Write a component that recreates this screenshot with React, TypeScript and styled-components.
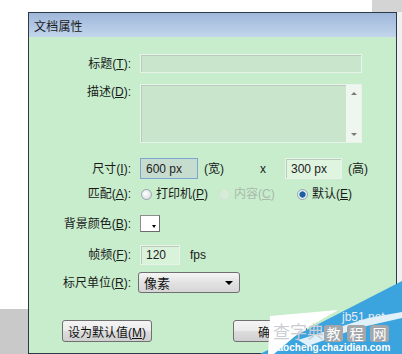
import React from "react";
import styled, { createGlobalStyle } from "styled-components";

const Global = createGlobalStyle`
  html, body { margin: 0; padding: 0; background: #fff; }
  body { font-family: "Liberation Sans", "Noto Sans CJK SC", sans-serif; }
`;

const UI_FONT = `"Liberation Sans", "Noto Sans CJK SC", sans-serif`;

const Page = styled.div`
  position: relative;
  width: 402px;
  height: 354px;
  overflow: hidden;
  display: grid;
  grid-template-columns: 28px 369px 5px;
  grid-template-rows: 12px 342px;
  background: #fff;
`;

const TopStrip = styled.div`
  grid-column: 2 / 4;
  grid-row: 1;
  display: flex;
  justify-content: flex-end;
`;

const GrayBlock = styled.div<{ $w?: string; $h?: string; $c: string }>`
  width: ${(p) => p.$w ?? "100%"};
  height: ${(p) => p.$h ?? "100%"};
  background: ${(p) => p.$c};
`;

const LeftStrip = styled.div`
  grid-column: 1;
  grid-row: 2;
  display: flex;
  flex-direction: column;
  justify-content: flex-end;
`;

const RightStrip = styled.div`
  grid-column: 3;
  grid-row: 2;
  background: #eef0f2;
`;

const Dialog = styled.div`
  grid-column: 2;
  grid-row: 2;
  border: 1px solid #2c3a48;
  display: flex;
  flex-direction: column;
  background: #c7edcc;
`;

const TitleBar = styled.div`
  height: 24px;
  display: flex;
  align-items: center;
  padding-left: 5px;
  background: linear-gradient(#9fb7da, #c2d5ec);
  font-family: "Noto Sans CJK SC", sans-serif;
  font-size: 12px;
  color: #1b1b1b;
  letter-spacing: 0.2px;
`;

const Body = styled.div`
  flex: 1;
  display: flex;
  flex-direction: column;
  padding-top: 17px;
  font-family: ${UI_FONT};
`;

const Row = styled.div<{ $mt: number; $align?: string }>`
  display: flex;
  align-items: ${(p) => p.$align ?? "center"};
  margin-top: ${(p) => p.$mt}px;
`;

const Label = styled.div<{ $pt?: number }>`
  width: 102px;
  margin-right: 9px;
  text-align: right;
  font-size: 12px;
  line-height: 14px;
  color: #1a1a1a;
  padding-top: ${(p) => p.$pt ?? 0}px;
  u { text-decoration: underline; text-underline-offset: 1px; }
`;

const TextInput = styled.div<{ $w: number; $h: number; $bg?: string; $focus?: boolean; $ml?: number }>`
  width: ${(p) => p.$w}px;
  height: ${(p) => p.$h}px;
  margin-left: ${(p) => p.$ml ?? 0}px;
  box-sizing: border-box;
  background: ${(p) => p.$bg ?? "#c9e5cc"};
  border: 1px solid ${(p) => (p.$focus ? "#7fa6d0" : "#e8f4e9")};
  box-shadow: ${(p) => (p.$focus ? "none" : "inset 1px 1px 0 #b9ccbc")};
  font-family: "Liberation Sans", Arial, sans-serif;
  font-size: 12px;
  color: #222;
  padding-left: 5px;
  display: flex;
  align-items: center;
`;

const TextArea = styled.div`
  width: 222px;
  height: 59px;
  box-sizing: border-box;
  background: #c9e5cc;
  border: 1px solid #e8f4e9;
  box-shadow: inset 1px 1px 0 #b9ccbc;
  display: flex;
  justify-content: flex-end;
`;

const ScrollBar = styled.div`
  width: 15px;
  height: 100%;
  background: #eef6ef;
  display: flex;
  flex-direction: column;
  justify-content: space-between;
  align-items: center;
  padding: 7px 0 6px;
  box-sizing: border-box;
`;

const Arrow = styled.div<{ $up?: boolean }>`
  width: 0;
  height: 0;
  border-left: 3px solid transparent;
  border-right: 3px solid transparent;
  ${(p) => (p.$up ? "border-bottom: 3px solid #7a7a7a;" : "border-top: 3px solid #7a7a7a;")}
`;

const Text = styled.span<{ $ml: number; $color?: string }>`
  margin-left: ${(p) => p.$ml}px;
  font-size: 12px;
  line-height: 14px;
  color: ${(p) => p.$color ?? "#1a1a1a"};
`;

const RadioItem = styled.div<{ $disabled?: boolean }>`
  width: 78px;
  display: flex;
  align-items: center;
  gap: 4px;
  font-size: 12px;
  line-height: 14px;
  color: ${(p) => (p.$disabled ? "#a9b9ab" : "#1a1a1a")};
  u { text-decoration: underline; text-underline-offset: 1px; }
`;

const RadioCircle = styled.div<{ $checked?: boolean; $disabled?: boolean }>`
  width: 11px;
  height: 11px;
  box-sizing: border-box;
  margin-left: 1px;
  border-radius: 50%;
  border: 1px solid ${(p) => (p.$disabled ? "#d2e4d4" : "#9aa4ac")};
  background: ${(p) =>
    p.$disabled
      ? "#d6ecd8"
      : p.$checked
      ? "radial-gradient(circle, #1d5f9c 0 2.5px, #5d93c6 3px, #e4eef7 3.5px)"
      : "radial-gradient(circle at 40% 40%, #ffffff, #d0d6dc)"};
`;

const Swatch = styled.div`
  width: 20px;
  height: 17px;
  box-sizing: border-box;
  background: #fff;
  border: 1px solid #8d8d8d;
  border-right-color: #6a6a6a;
  border-bottom-color: #6a6a6a;
  display: flex;
  align-items: flex-end;
  justify-content: flex-end;
  padding: 0 3px 3px 0;
`;

const SmallTri = styled.div`
  width: 0;
  height: 0;
  border-left: 2.5px solid transparent;
  border-right: 2.5px solid transparent;
  border-top: 3px solid #000;
`;

const Select = styled.div`
  margin-left: -2px;
  width: 102px;
  height: 21px;
  box-sizing: border-box;
  border: 1px solid #6f6f6f;
  border-radius: 3px;
  background: linear-gradient(#f6f6f6, #e2e2e2 50%, #d6d6d6);
  display: flex;
  align-items: center;
  justify-content: space-between;
  padding: 0 6px 0 5px;
  font-family: "Noto Sans CJK SC", sans-serif;
  font-size: 13px;
  color: #111;
`;

const SelectArrow = styled.div`
  width: 0;
  height: 0;
  border-left: 4px solid transparent;
  border-right: 4px solid transparent;
  border-top: 4px solid #000;
`;

const ButtonRow = styled.div`
  display: flex;
  margin-top: 27px;
  padding-left: 33px;
  gap: 81px;
`;

const Button = styled.div<{ $w: number }>`
  width: ${(p) => p.$w}px;
  height: 22px;
  box-sizing: border-box;
  border: 1px solid #707070;
  border-radius: 3px;
  background: linear-gradient(#f4f4f4, #ebebeb 50%, #dddddd 51%, #d0d0d0);
  display: flex;
  align-items: center;
  justify-content: center;
  font-size: 12px;
  color: #111;
  u { text-decoration: underline; text-underline-offset: 1px; }
`;

const Watermark = styled.div`
  position: absolute;
  left: 258px;
  top: 278px;
  width: 144px;
  height: 76px;
`;

const WmSvg = styled.svg`
  position: absolute;
  inset: 0;
`;

const WmText = styled.span<{ $x: number; $y: number; $size: number; $color: string; $latin?: boolean; $bold?: boolean }>`
  position: absolute;
  left: ${(p) => p.$x}px;
  top: ${(p) => p.$y}px;
  font-size: ${(p) => p.$size}px;
  line-height: 1;
  color: ${(p) => p.$color};
  font-weight: ${(p) => (p.$bold ? 700 : 400)};
  font-family: ${(p) =>
    p.$latin ? `"Liberation Sans", Arial, sans-serif` : `"Noto Sans CJK SC", sans-serif`};
  white-space: nowrap;
`;

const WmBox = styled.span<{ $x: number }>`
  position: absolute;
  left: ${(p) => p.$x}px;
  top: 47px;
  width: 19px;
  height: 17px;
  border-radius: 3px;
  background: #a3a7ab;
  color: #fff;
  font-size: 14px;
  line-height: 17px;
  text-align: center;
  font-family: "Noto Sans CJK SC", sans-serif;
`;

export default function App() {
  return (
    <>
      <Global />
      <Page>
        <TopStrip>
          <GrayBlock $w="30px" $c="#d4d4d4" />
        </TopStrip>
        <LeftStrip>
          <GrayBlock $h="45px" $c="#c9c9c9" />
        </LeftStrip>
        <Dialog>
          <TitleBar>文档属性</TitleBar>
          <Body>
            <Row $mt={0}>
              <Label>
                标题(<u>T</u>):
              </Label>
              <TextInput $w={222} $h={19} />
            </Row>
            <Row $mt={11} $align="flex-start">
              <Label $pt={1}>
                描述(<u>D</u>):
              </Label>
              <TextArea>
                <ScrollBar>
                  <Arrow $up />
                  <Arrow />
                </ScrollBar>
              </TextArea>
            </Row>
            <Row $mt={15}>
              <Label>
                尺寸(<u>I</u>):
              </Label>
              <TextInput $w={58} $h={21} $bg="#c6dccf" $focus>
                600 px
              </TextInput>
              <Text $ml={6}>(宽)</Text>
              <Text $ml={36}>x</Text>
              <TextInput $w={57} $h={21} $bg="#dff5df" $ml={19}>
                300 px
              </TextInput>
              <Text $ml={6}>(高)</Text>
            </Row>
            <Row $mt={8}>
              <Label>
                匹配(<u>A</u>):
              </Label>
              <RadioItem>
                <RadioCircle />
                <span>
                  打印机(<u>P</u>)
                </span>
              </RadioItem>
              <RadioItem $disabled>
                <RadioCircle $disabled />
                <span>
                  内容(<u>C</u>)
                </span>
              </RadioItem>
              <RadioItem>
                <RadioCircle $checked />
                <span>
                  默认(<u>E</u>)
                </span>
              </RadioItem>
            </Row>
            <Row $mt={14}>
              <Label>
                背景颜色(<u>B</u>):
              </Label>
              <Swatch>
                <SmallTri />
              </Swatch>
            </Row>
            <Row $mt={13}>
              <Label>
                帧频(<u>F</u>):
              </Label>
              <TextInput $w={40} $h={20} $bg="#d9f3db">
                120
              </TextInput>
              <Text $ml={10}>fps</Text>
            </Row>
            <Row $mt={7}>
              <Label>
                标尺单位(<u>R</u>):
              </Label>
              <Select>
                像素
                <SelectArrow />
              </Select>
            </Row>
            <ButtonRow>
              <Button $w={90}>
                <span>
                  设为默认值(<u>M</u>)
                </span>
              </Button>
              <Button $w={74}>确定</Button>
            </ButtonRow>
          </Body>
        </Dialog>
        <RightStrip />
        <Watermark>
          <WmSvg width="144" height="76" viewBox="0 0 144 76">
            <polygon points="2,76 144,3 144,76" fill="#3ba3de" />
            <polygon points="12,38 80,32 42,54 16,76 10,76" fill="#ffffff" />
            <polygon points="40,62 110,40 144,34 144,40 100,50 50,68" fill="#ffffff" opacity="0.85" />
          </WmSvg>
          <WmText $x={84} $y={33} $size={12} $color="#e8eef4" $latin>
            jb51.net
          </WmText>
          <WmText $x={15} $y={44} $size={17} $color="#c9cdd1">
            查字典
          </WmText>
          <WmBox $x={66}>教</WmBox>
          <WmBox $x={89}>程</WmBox>
          <WmBox $x={112}>网</WmBox>
          <WmText $x={14} $y={65} $size={10} $color="#ffffff" $latin $bold>
            jiaocheng.chazidian.com
          </WmText>
        </Watermark>
      </Page>
    </>
  );
}
